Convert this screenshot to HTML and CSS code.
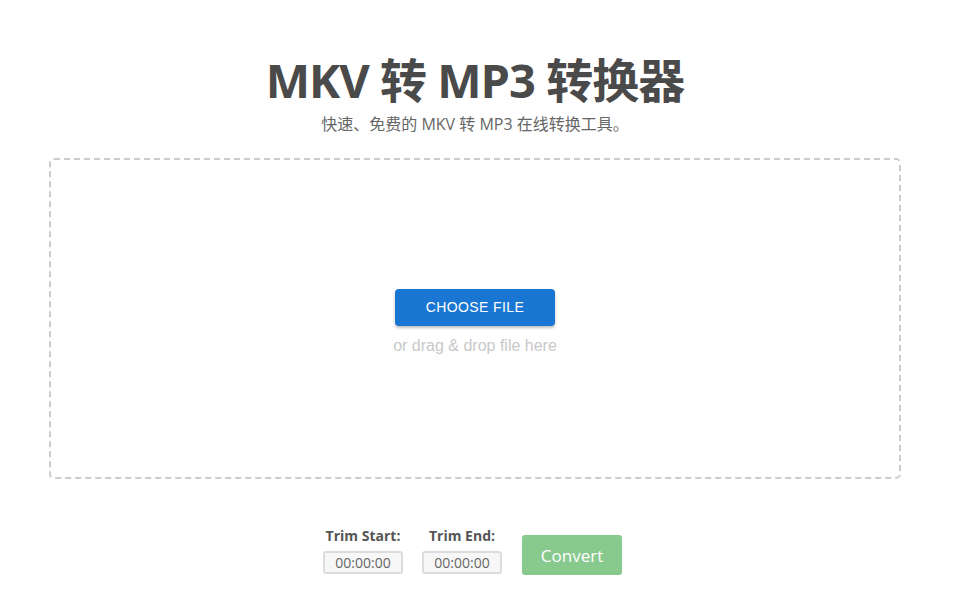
FILE: index.html
```html
<!DOCTYPE html>
<html lang="zh">
<head>
<meta charset="utf-8">
<title>MKV 转 MP3 转换器</title>
<link rel="stylesheet" href="styles.css">
</head>
<body>
<div class="page">
  <header class="hero">
    <h1 class="title">MKV 转 MP3 转换器</h1>
    <p class="subtitle">快速、免费的 MKV 转 MP3 在线转换工具。</p>
  </header>
  <section class="dropzone">
    <button class="choose-btn" type="button">Choose File</button>
    <div class="drag-text">or drag &amp; drop file here</div>
  </section>
  <section class="controls">
    <div class="field">
      <label class="field-label">Trim Start:</label>
      <input class="time-input" type="text" value="00:00:00">
    </div>
    <div class="field">
      <label class="field-label">Trim End:</label>
      <input class="time-input" type="text" value="00:00:00">
    </div>
    <button class="convert-btn" type="button">Convert</button>
  </section>
</div>
</body>
</html>
```

FILE: styles.css
```css
html, body {
  margin: 0;
  padding: 0;
  background: #ffffff;
}
body {
  font-family: "Open Sans", "Noto Sans CJK SC", sans-serif;
  color: #555;
}
.page {
  width: 852px;
  margin: 0 60px 0 49px;
}
.hero {
  text-align: center;
  padding-top: 52px;
}
.title {
  margin: 0;
  font-size: 47px;
  line-height: 56px;
  font-weight: 700;
  color: #4a4a4a;
  letter-spacing: -1px;
}
.subtitle {
  margin: 5px 0 0;
  font-size: 16px;
  line-height: 22px;
  color: #666;
}
.dropzone {
  box-sizing: border-box;
  margin-top: 23px;
  height: 321px;
  border: 2px dashed #cccccc;
  border-radius: 5px;
  display: flex;
  flex-direction: column;
  align-items: center;
  justify-content: center;
  gap: 11px;
  padding-top: 6px;
}
.choose-btn {
  width: 160px;
  height: 37px;
  border: none;
  border-radius: 4px;
  background: #1976d2;
  color: #fff;
  font-family: "Liberation Sans", Arial, sans-serif;
  font-size: 14px;
  letter-spacing: 0.4px;
  text-transform: uppercase;
  box-shadow: 0 2px 3px rgba(0,0,0,0.25);
  padding: 0;
}
.drag-text {
  font-family: "Liberation Sans", Arial, sans-serif;
  font-size: 16px;
  line-height: 18px;
  color: #c8c8c8;
}
.controls {
  margin-top: 48px;
  display: flex;
  justify-content: center;
  align-items: flex-end;
  gap: 19px;
  padding-right: 5px;
}
.field {
  display: flex;
  flex-direction: column;
  align-items: center;
  width: 80px;
  margin-bottom: 1px;
}
.field-label {
  font-size: 14px;
  font-weight: 700;
  line-height: 18px;
  color: #555;
  margin-bottom: 6px;
  white-space: nowrap;
}
.time-input {
  box-sizing: border-box;
  width: 80px;
  height: 23px;
  border: 2px solid #dcdcdc;
  border-radius: 3px;
  background: #f7f7f7;
  font-family: "Open Sans", sans-serif;
  font-size: 14px;
  color: #666;
  text-align: center;
  padding: 0;
}
.convert-btn {
  margin-left: 1px;
  width: 100px;
  height: 40px;
  border: none;
  border-radius: 3px;
  background: #88c98e;
  color: #fff;
  font-family: "Open Sans", sans-serif;
  font-size: 17px;
  padding: 0;
}
```
